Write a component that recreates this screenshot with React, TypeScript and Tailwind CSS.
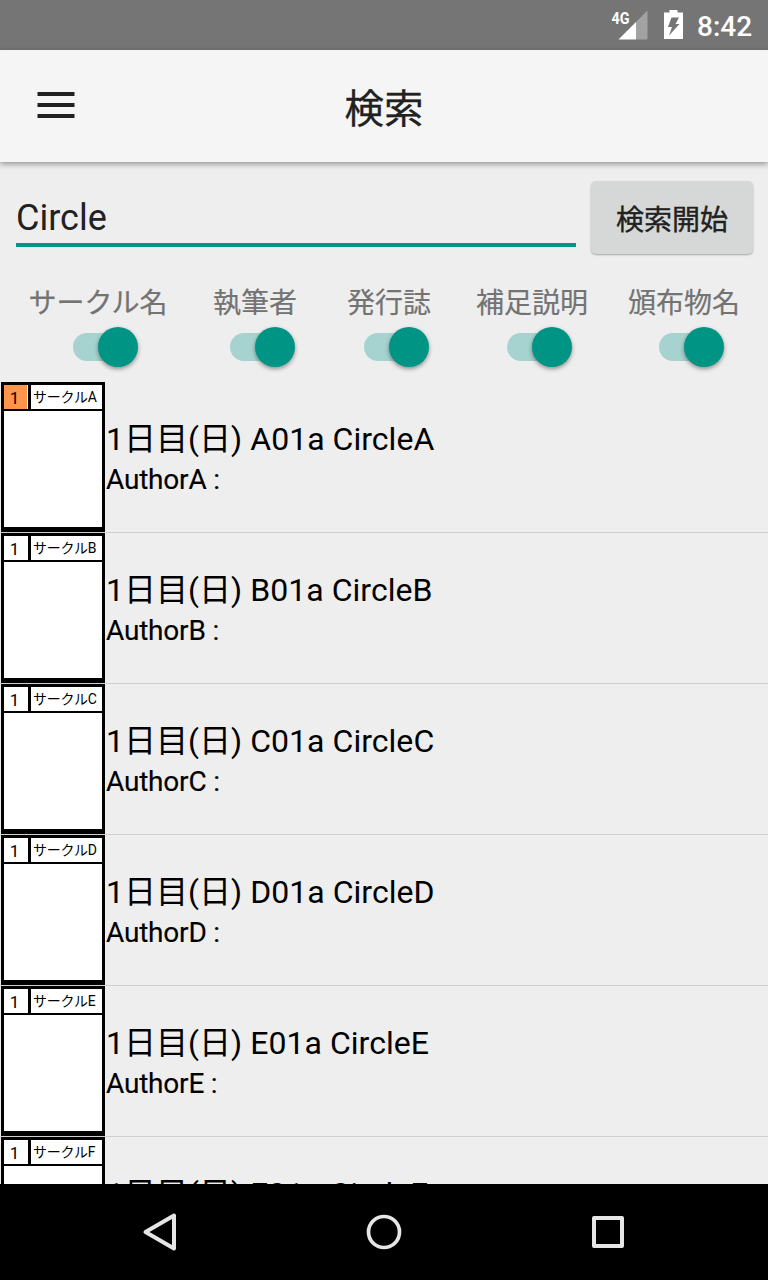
const filters = ["サークル名", "執筆者", "発行誌", "補足説明", "頒布物名"];
const circles = ["A", "B", "C", "D", "E", "F"];

function StatusBar() {
  return (
    <div className="flex h-[50px] shrink-0 items-start bg-[#757575] pl-[611px] text-white">
      <svg width="37" height="50" viewBox="0 0 37 50">
        <text x="0.5" y="23.5" fontSize="17" fontWeight="700" fill="#fff" textLength="18" lengthAdjust="spacingAndGlyphs" fontFamily="Roboto">4G</text>
        <path d="M36.500 10.500V39.500H25V22z" fill="#fff" fillOpacity="0.33" />
        <path d="M7.500 39.500L25 22v17.500z" fill="#fff" />
      </svg>
      <svg width="20" height="50" viewBox="0 0 20 50" className="ml-4">
        <path d="M5.500 10h8v2.500H19V39H0V12.500h5.500z" fill="#fff" />
        <path d="M7.500 17.500h7.500L11.500 24h4L5 35.500L8 27H4z" fill="#757575" />
      </svg>
      <span className="ml-[13px] pt-[7px] text-[28px] leading-[40px] font-medium">8:42</span>
    </div>
  );
}

function AppBar() {
  return (
    <header className="relative z-10 flex h-28 shrink-0 items-center justify-center bg-[#f5f5f5] shadow-[0_2px_6px_rgba(0,0,0,0.4)]">
      <svg width="38" height="26" viewBox="0 0 38 26" className="absolute top-[42px] left-[37px]">
        <path d="M0.500 0h37v4h-37zM0.500 11h37v4h-37zM0.500 22h37v4h-37z" fill="#212121" />
      </svg>
      <h1 className="pt-[7px] text-[39.5px] leading-[60px] text-[#212121] [-webkit-text-stroke:0.3px_#212121]">検索</h1>
    </header>
  );
}

function Switch() {
  return (
    <div className="relative ml-[15px] h-10 w-[65px]">
      <div className="absolute top-[6px] left-0 h-7 w-[60px] rounded-full bg-[#a6d3cf]" />
      <div className="absolute top-0 right-0 size-10 rounded-full bg-[#009485] shadow-[0_2px_4px_rgba(0,0,0,0.4)]" />
    </div>
  );
}

function CircleRow({ name, marked }: { name: string; marked: boolean }) {
  return (
    <li className="flex h-[151px] shrink-0 border-b border-[#cecece] pl-px">
      <div className="flex h-[150px] w-[104px] shrink-0 flex-col border-x-[3px] border-t-[3px] border-b-[5px] border-black bg-white">
        <div className="flex h-[26px] shrink-0 border-b-2 border-black leading-6">
          <div className="flex w-[27px] border-r-[3px] border-black">
            <span className={marked ? "w-[23px] bg-[#ff944b] pt-px pr-[2px] text-center text-[17px] leading-6" : "w-[23px] pt-px pr-[2px] text-center text-[17px] leading-6"}>1</span>
          </div>
          <span className="pl-[2px] text-[14px] tracking-[-0.2px] whitespace-nowrap">サークル{name}</span>
        </div>
      </div>
      <div className="flex flex-col pt-[35px] pl-px whitespace-nowrap text-black">
        <p className="text-[32px] leading-[44px] tracking-[0.03px]">1日目(日) {name}01a Circle{name}</p>
        <p className="pt-px text-[28px] leading-[36px] tracking-[-0.2px] [-webkit-text-stroke:0.15px_#000]">Author{name} :</p>
      </div>
    </li>
  );
}

function NavBar() {
  return (
    <nav className="flex h-24 shrink-0 items-center justify-around bg-black px-12">
      <svg width="48" height="48" viewBox="0 0 48 48" fill="none" stroke="#e6e6e6" strokeWidth="4" strokeLinejoin="round">
        <path d="M9.500 24L38 7.500v33z" />
      </svg>
      <svg width="48" height="48" viewBox="0 0 48 48" fill="none" stroke="#e6e6e6" strokeWidth="3.700">
        <circle cx="24" cy="24" r="15.500" />
      </svg>
      <svg width="48" height="48" viewBox="0 0 48 48" fill="none" stroke="#e6e6e6" strokeWidth="4" strokeLinejoin="round">
        <path d="M10 10h28v28H10z" />
      </svg>
    </nav>
  );
}

export default function App() {
  return (
    <div className="flex h-[1280px] w-[768px] flex-col overflow-hidden bg-[#eeeeee] font-['Roboto','Noto_Sans_CJK_JP',sans-serif]">
      <StatusBar />
      <AppBar />
      <main className="flex min-h-0 flex-1 flex-col overflow-hidden">
        <div className="flex h-[110px] shrink-0 pl-4">
          <input
            type="text"
            defaultValue="Circle"
            className="mt-5 h-[65px] w-[560px] border-b-4 border-[#009688] pt-[10px] text-[36px] text-[#212121] outline-none"
          />
          <button className="mt-[19px] ml-[15px] h-[73px] w-[162px] rounded-[5px] bg-[#d6d8d7] pt-[6px] text-[28px] text-[#212121] shadow-[0_1px_2px_rgba(0,0,0,0.3)] [-webkit-text-stroke:0.4px_#212121]">
            検索開始
          </button>
        </div>
        <div className="grid h-[110px] shrink-0 grid-cols-[196px_118px_150px_136px_168px] pt-[11px]">
          {filters.map((label) => (
            <div key={label} className="flex flex-col items-center">
              <span className="h-[44px] text-[28px] leading-[42px] whitespace-nowrap text-[#737373] [-webkit-text-stroke:0.2px_#737373]">{label}</span>
              <Switch />
            </div>
          ))}
        </div>
        <ul className="flex min-h-0 flex-1 flex-col overflow-hidden">
          {circles.map((name, i) => (
            <CircleRow key={name} name={name} marked={i === 0} />
          ))}
        </ul>
      </main>
      <NavBar />
    </div>
  );
}
